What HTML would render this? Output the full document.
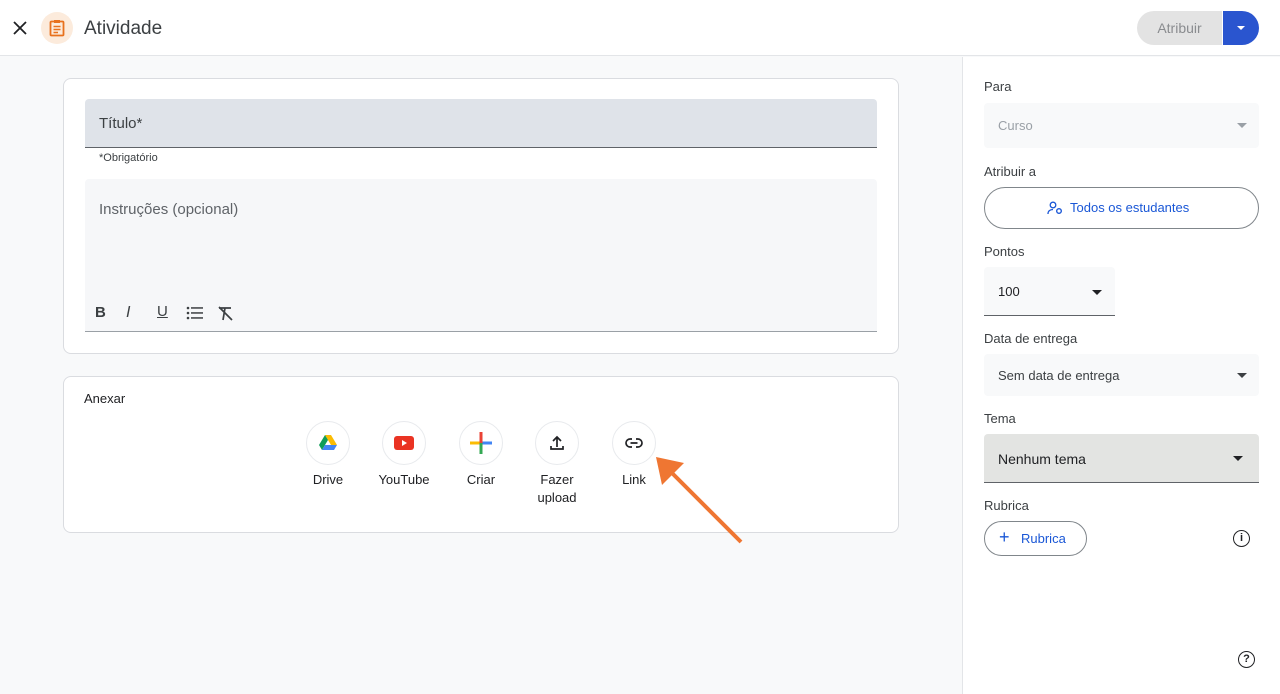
<!DOCTYPE html>
<html><head><meta charset="utf-8"><style>
*{box-sizing:border-box;margin:0;padding:0}
body{width:1280px;height:694px;overflow:hidden;background:#f8f9fa;font-family:"Liberation Sans",Arial,sans-serif;color:#202124;position:relative}
.a{position:absolute}
.lbl{position:absolute;left:984px;font-size:13px;color:#3c4043}
.tri{position:absolute;width:0;height:0;border-left:5px solid transparent;border-right:5px solid transparent;border-top:5px solid #5f6368}
.circ{position:absolute;width:44px;height:44px;border-radius:50%;background:#fff;border:1px solid #e8eaed;display:flex;align-items:center;justify-content:center}
.cap{position:absolute;width:80px;text-align:center;font-size:13px;color:#202124;line-height:18px}
</style></head><body>
<div class="a" style="left:0;top:0;width:1280px;height:56px;background:#fff;border-bottom:1px solid #e3e5e8"></div>
<svg class="a" style="left:13px;top:21px" width="14" height="14" viewBox="0 0 14 14"><path d="M1 1L13 13M13 1L1 13" stroke="#202124" stroke-width="1.8"/></svg>
<div class="a" style="left:41px;top:12px;width:32px;height:32px;border-radius:50%;background:#fcebdc"></div>
<svg class="a" style="left:49px;top:19px" width="16" height="18" viewBox="0 0 16 18"><rect x="1.5" y="2.5" width="13" height="14" rx="1" fill="none" stroke="#e8711d" stroke-width="1.8"/><rect x="5" y="1" width="6" height="3" fill="#e8711d"/><path d="M4.5 7.5h7M4.5 10.5h7M4.5 13.5h4.5" stroke="#e8711d" stroke-width="1.5"/></svg>
<div class="a" style="left:84px;top:18px;font-size:19px;color:#3c4043">Atividade</div>
<div class="a" style="left:1137px;top:11px;width:85px;height:34px;border-radius:17px 0 0 17px;background:#e3e3e3;color:#8a8c8f;font-size:14px;text-align:center;line-height:34px">Atribuir</div>
<div class="a" style="left:1223px;top:11px;width:36px;height:34px;border-radius:0 17px 17px 0;background:#2a55cf"></div>
<div class="tri" style="left:1237px;top:26px;border-top-color:#fff;border-left-width:4px;border-right-width:4px;border-top-width:4px"></div>
<div class="a" style="left:962px;top:57px;width:318px;height:637px;background:#fff;border-left:1px solid #e3e5e8"></div>

<div class="a" style="left:63px;top:78px;width:836px;height:276px;background:#fff;border:1px solid #dadce0;border-radius:8px"></div>
<div class="a" style="left:85px;top:99px;width:792px;height:49px;background:#dfe3e9;border-bottom:1px solid #5f6368;border-radius:4px 4px 0 0"></div>
<div class="a" style="left:99px;top:115px;font-size:15px;color:#3c4043">Título*</div>
<div class="a" style="left:99px;top:152px;font-size:11px;color:#3c4043">*Obrigatório</div>
<div class="a" style="left:85px;top:179px;width:792px;height:153px;background:#f6f7f9;border-bottom:1px solid #9aa0a6;border-radius:4px 4px 0 0"></div>
<div class="a" style="left:99px;top:201px;font-size:15px;color:#5f6368">Instruções (opcional)</div>
<div class="a" style="left:95px;top:304px;font-size:15px;font-weight:bold;color:#3c4043">B</div>
<div class="a" style="left:126px;top:304px;font-size:16px;font-style:italic;color:#3c4043">I</div>
<div class="a" style="left:157px;top:303px;font-size:15px;text-decoration:underline;color:#3c4043">U</div>
<svg class="a" style="left:186px;top:306px" width="18" height="14" viewBox="0 0 18 14"><g fill="#3c4043"><circle cx="2" cy="2" r="1.3"/><circle cx="2" cy="7" r="1.3"/><circle cx="2" cy="12" r="1.3"/><rect x="5" y="1.2" width="12" height="1.5"/><rect x="5" y="6.2" width="12" height="1.5"/><rect x="5" y="11.2" width="12" height="1.5"/></g></svg>
<svg class="a" style="left:217px;top:306px" width="17" height="15" viewBox="0 0 17 15"><path d="M2 2h12M8 2l-2 12M2 1l13 13" stroke="#3c4043" stroke-width="1.7" fill="none"/></svg>

<div class="a" style="left:63px;top:376px;width:836px;height:157px;background:#fff;border:1px solid #dadce0;border-radius:8px"></div>
<div class="a" style="left:84px;top:391px;font-size:13px;color:#202124">Anexar</div>
<div class="circ" style="left:306px;top:421px"><svg width="20" height="18" viewBox="0 0 20 18"><path d="M7 1h6l6 10h-6z" fill="#fbbc04"/><path d="M7 1L1 11l3 5 6-10z" fill="#0f9d58"/><path d="M4 16h12l3-5H7z" fill="#4285f4"/></svg></div>
<div class="circ" style="left:382px;top:421px"><svg width="20" height="14" viewBox="0 0 20 14"><rect width="20" height="14" rx="3" fill="#ea3323"/><path d="M8 4l5 3-5 3z" fill="#fff"/></svg></div>
<div class="circ" style="left:459px;top:421px"><svg width="22" height="22" viewBox="0 0 22 22"><rect x="0" y="9.5" width="11" height="3" fill="#fbbc04"/><rect x="11" y="9.5" width="11" height="3" fill="#4285f4"/><rect x="9.5" y="0" width="3" height="11" fill="#ea4335"/><rect x="9.5" y="11" width="3" height="11" fill="#34a853"/></svg></div>
<div class="circ" style="left:535px;top:421px"><svg width="16" height="16" viewBox="0 0 16 16"><path d="M8 12V2M4 6l4-4 4 4M2 11v3h12v-3" stroke="#202124" stroke-width="1.7" fill="none"/></svg></div>
<div class="circ" style="left:612px;top:421px"><svg width="18" height="10" viewBox="0 0 18 10"><path d="M7 1H5a4 4 0 000 8h2M11 1h2a4 4 0 010 8h-2M5.5 5h7" stroke="#202124" stroke-width="1.7" fill="none"/></svg></div>
<div class="cap" style="left:288px;top:471px">Drive</div>
<div class="cap" style="left:364px;top:471px">YouTube</div>
<div class="cap" style="left:441px;top:471px">Criar</div>
<div class="cap" style="left:517px;top:471px">Fazer<br>upload</div>
<div class="cap" style="left:594px;top:471px">Link</div>
<svg class="a" style="left:650px;top:450px" width="100" height="100" viewBox="650 450 100 100"><path d="M741 542L668 469" stroke="#ef7632" stroke-width="4"/><path d="M656 457L684 463L662 485z" fill="#ef7632"/></svg>

<div class="lbl" style="top:79px">Para</div>
<div class="a" style="left:984px;top:103px;width:275px;height:45px;background:#f8f9fa;border-radius:4px"></div>
<div class="a" style="left:998px;top:118px;font-size:13px;color:#9aa0a6">Curso</div>
<div class="tri" style="left:1237px;top:123px;border-top-color:#9aa0a6"></div>
<div class="lbl" style="top:164px">Atribuir a</div>
<div class="a" style="left:984px;top:187px;width:275px;height:42px;border:1px solid #80868b;border-radius:21px"></div>
<svg class="a" style="left:1047px;top:201px" width="16" height="14" viewBox="0 0 16 14"><circle cx="6" cy="4" r="2.8" fill="none" stroke="#1a57d6" stroke-width="1.3"/><path d="M1 13c0-3 2-4.5 5-4.5" fill="none" stroke="#1a57d6" stroke-width="1.3"/><circle cx="12" cy="10" r="2.3" fill="none" stroke="#1a57d6" stroke-width="1.4"/></svg>
<div class="a" style="left:1070px;top:200px;font-size:13px;color:#1a57d6">Todos os estudantes</div>
<div class="lbl" style="top:244px">Pontos</div>
<div class="a" style="left:984px;top:267px;width:131px;height:49px;background:#f8f9fa;border-bottom:1px solid #5f6368;border-radius:4px 4px 0 0"></div>
<div class="a" style="left:998px;top:284px;font-size:13px">100</div>
<div class="tri" style="left:1092px;top:290px;border-top-color:#202124"></div>
<div class="lbl" style="top:331px">Data de entrega</div>
<div class="a" style="left:984px;top:354px;width:275px;height:42px;background:#f8f9fa;border-radius:4px"></div>
<div class="a" style="left:998px;top:368px;font-size:13px;color:#3c4043">Sem data de entrega</div>
<div class="tri" style="left:1237px;top:373px;border-top-color:#3c4043"></div>
<div class="lbl" style="top:411px">Tema</div>
<div class="a" style="left:984px;top:434px;width:275px;height:49px;background:#e3e4e2;border-bottom:1px solid #5f6368;border-radius:4px 4px 0 0"></div>
<div class="a" style="left:998px;top:451px;font-size:14px;color:#202124">Nenhum tema</div>
<div class="tri" style="left:1233px;top:456px;border-top-color:#202124"></div>
<div class="lbl" style="top:498px">Rubrica</div>
<div class="a" style="left:984px;top:521px;width:103px;height:35px;border:1px solid #80868b;border-radius:18px"></div>
<div class="a" style="left:999px;top:527px;font-size:18px;color:#1a57d6">+</div>
<div class="a" style="left:1021px;top:531px;font-size:13px;color:#1a57d6">Rubrica</div>
<div class="a" style="left:1233px;top:530px;width:17px;height:17px;border:1.6px solid #202124;border-radius:50%;font-size:11px;text-align:center;line-height:14px;font-weight:bold">i</div>
<div class="a" style="left:1238px;top:651px;width:17px;height:17px;border:1.6px solid #202124;border-radius:50%;font-size:11px;text-align:center;line-height:14px;font-weight:bold">?</div>
</body></html>
